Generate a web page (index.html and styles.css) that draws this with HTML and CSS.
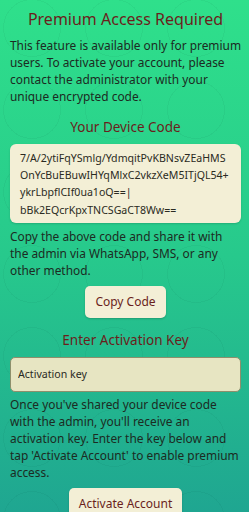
FILE: index.html
```html
<!DOCTYPE html>
<html lang="en">

<head>
    <meta charset="UTF-8">
    <meta name="viewport" content="width=device-width, initial-scale=1.0">
    <title>Premium Access</title>
    <link rel="stylesheet" href="styles.css">
</head>

<body>
    <div class="page">
        <h1 class="title">Premium Access Required</h1>
        <p class="text">This feature is available only for premium users. To activate your account, please contact the administrator with your unique encrypted code.</p>

        <h2 class="subtitle">Your Device Code</h2>
        <div class="code-box">7/A/2ytiFqYSmlg/YdmqitPvKBNsvZEaHMS<br>OnYcBuEBuwIHYqMlxC2vkzXeM5ITjQL54+<br>ykrLbpflCIf0ua1oQ==|<br>bBk2EQcrKpxTNCSGaCT8Ww==</div>
        <p class="text">Copy the above code and share it with the admin via WhatsApp, SMS, or any other method.</p>

        <div class="actions">
            <button class="btn" id="copyBtn">Copy Code</button>
        </div>

        <h2 class="subtitle">Enter Activation Key</h2>
        <input class="key-input" type="text" placeholder="Activation key">
        <p class="text">Once you've shared your device code with the admin, you'll receive an activation key. Enter the key below and tap 'Activate Account' to enable premium access.</p>

        <div class="actions">
            <button class="btn" id="activateBtn">Activate Account</button>
        </div>
    </div>
</body>

</html>
```
FILE: styles.css
```css
* {
    margin: 0;
    padding: 0;
    box-sizing: border-box;
}

body {
    height: 100vh;
    background:
        repeating-radial-gradient(circle at 40px 40px, transparent 0 28px, rgba(0, 60, 40, 0.05) 28px 29px, transparent 29px 40px),
        linear-gradient(180deg, #2fe08b 0%, #27c98c 50%, #1fa691 100%);
    background-size: 82px 82px, 100% 100%;
    background-position: -8px -12px, 0 0;
    font-family: 'Noto Sans', 'Open Sans', sans-serif;
    color: #1c2b22;
    overflow: hidden;
}

.page {
    padding: 8px 8px 0 10px;
    display: flex;
    flex-direction: column;
}

.title {
    text-align: center;
    font-size: 16px;
    font-weight: 400;
    color: #6a1e1c;
    line-height: 22px;
    margin-bottom: 7px;
}

.text {
    font-size: 11.9px;
    line-height: 17px;
}

.subtitle {
    text-align: center;
    font-size: 13.5px;
    font-weight: 400;
    color: #6a1e1c;
    line-height: 20px;
    margin: 12px 0 7px;
}

.code-box {
    background: #f3efd6;
    border-radius: 6px;
    padding: 6px 8px 4px 10px;
    font-size: 10.6px;
    line-height: 17.2px;
    color: #2a2a22;
    margin-bottom: 5px;
    box-shadow: 0 1px 2px rgba(0, 0, 0, 0.15);
}

.actions {
    display: flex;
    justify-content: center;
    margin-top: 7px;
}

.btn {
    background: #f3efd6;
    border: none;
    border-radius: 5px;
    padding: 0 10px;
    height: 32px;
    font-family: inherit;
    font-size: 12px;
    color: #6a1e1c;
    box-shadow: 0 1px 2px rgba(0, 0, 0, 0.2);
    cursor: pointer;
}

.key-input {
    width: 100%;
    height: 35px;
    background: #e7e5c2;
    border: 1px solid #8d8f6c;
    border-radius: 5px;
    padding: 0 7px;
    font-family: inherit;
    font-size: 10.6px;
    color: #2a2a22;
    margin-bottom: 4px;
}

.key-input::placeholder {
    color: #2a2a22;
}
```
